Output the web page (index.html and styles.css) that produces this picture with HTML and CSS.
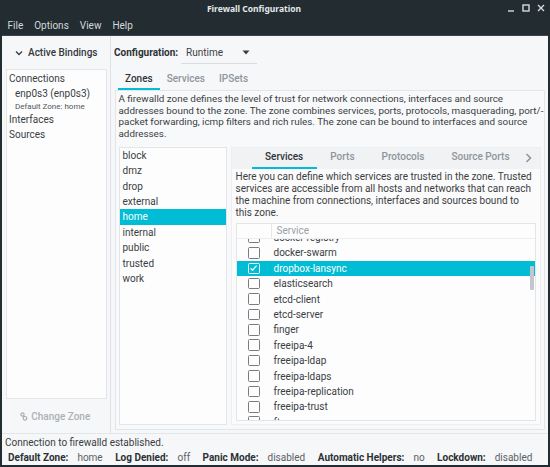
FILE: index.html
```html
<!DOCTYPE html>
<html>
<head>
<meta charset="utf-8">
<title>Firewall Configuration</title>
<link rel="stylesheet" href="styles.css">
</head>
<body>
<div class="window">
  <div class="titlebar">
    <span class="title">Firewall Configuration</span>
    <div class="wbtns">
      <svg width="8" height="8" viewBox="0 0 8 8"><path d="M1 7H7" stroke="#d5dadd" stroke-width="1.4"/></svg>
      <svg width="8" height="8" viewBox="0 0 8 8"><rect x="1" y="1" width="6" height="6" fill="none" stroke="#d5dadd" stroke-width="1.4"/></svg>
      <svg width="8" height="8" viewBox="0 0 8 8"><path d="M1 1L7 7M7 1L1 7" stroke="#d5dadd" stroke-width="1.4"/></svg>
    </div>
  </div>
  <div class="menubar">
    <span>File</span><span>Options</span><span>View</span><span>Help</span>
  </div>
  <div class="body">
    <div class="main">
      <div class="sidebar">
        <div class="bind-head">
          <svg width="8" height="6" viewBox="0 0 8 6"><path d="M1 1.5L4 4.5L7 1.5" fill="none" stroke="#3a3e42" stroke-width="1.3"/></svg>
          <span>Active Bindings</span>
        </div>
        <div class="bind-list">
          <div class="bl-item">Connections</div>
          <div class="bl-conn">enp0s3 (enp0s3)</div>
          <div class="bl-sub">Default Zone: home</div>
          <div class="bl-item">Interfaces</div>
          <div class="bl-item">Sources</div>
        </div>
        <div class="change-zone">
          <svg width="8" height="9" viewBox="0 0 8 9"><circle cx="2.5" cy="2.5" r="1.6" fill="none" stroke="#a8aeb3" stroke-width="1.2"/><circle cx="5" cy="6.3" r="1.8" fill="none" stroke="#a8aeb3" stroke-width="1.2"/><path d="M3.4 3.8L4.2 4.8" stroke="#a8aeb3" stroke-width="1.2"/></svg>
          <span>Change Zone</span>
        </div>
      </div>
      <div class="content">
        <div class="config-row">
          <span class="cfg-label">Configuration:</span>
          <div class="combo">
            <span>Runtime</span>
            <svg width="8" height="5" viewBox="0 0 8 5"><path d="M0.5 0.5H7.5L4 4.5Z" fill="#3a3e42"/></svg>
          </div>
        </div>
        <div class="tabs">
          <span class="tab active">Zones</span><span class="tab">Services</span><span class="tab">IPSets</span>
        </div>
        <div class="tabpanel">
          <p class="desc">A firewalld zone defines the level of trust for network connections, interfaces and source addresses bound to the zone. The zone combines services, ports, protocols, masquerading, port/-packet forwarding, icmp filters and rich rules. The zone can be bound to interfaces and source addresses.</p>
          <div class="zone-area">
            <div class="zone-list">
              <div class="zrow">block</div>
              <div class="zrow">dmz</div>
              <div class="zrow">drop</div>
              <div class="zrow">external</div>
              <div class="zrow sel">home</div>
              <div class="zrow">internal</div>
              <div class="zrow">public</div>
              <div class="zrow">trusted</div>
              <div class="zrow">work</div>
            </div>
            <div class="notebook">
              <div class="nb-tabs">
                <span class="nbtab active">Services</span><span class="nbtab">Ports</span><span class="nbtab">Protocols</span><span class="nbtab">Source Ports</span>
                <svg class="nb-arrow" width="7" height="10" viewBox="0 0 7 10"><path d="M1.5 1L5.5 5L1.5 9" fill="none" stroke="#8d9398" stroke-width="1.5"/></svg>
              </div>
              <div class="nb-body">
                <p class="nb-desc">Here you can define which services are trusted in the zone. Trusted services are accessible from all hosts and networks that can reach the machine from connections, interfaces and sources bound to this zone.</p>
                <div class="tree">
                  <div class="tree-head"><span class="th-c1"></span><span class="th-c2">Service</span></div>
                  <div class="tree-body">
                    <div class="rows">
                      <div class="trow"><span class="cb"></span><span>docker-registry</span></div>
                      <div class="trow"><span class="cb"></span><span>docker-swarm</span></div>
                      <div class="trow sel"><span class="cb on"><svg width="9" height="8" viewBox="0 0 9 8"><path d="M1.5 4.2L3.6 6.2L7.6 1.6" fill="none" stroke="#e6fafd" stroke-width="1.3"/></svg></span><span>dropbox-lansync</span></div>
                      <div class="trow"><span class="cb"></span><span>elasticsearch</span></div>
                      <div class="trow"><span class="cb"></span><span>etcd-client</span></div>
                      <div class="trow"><span class="cb"></span><span>etcd-server</span></div>
                      <div class="trow"><span class="cb"></span><span>finger</span></div>
                      <div class="trow"><span class="cb"></span><span>freeipa-4</span></div>
                      <div class="trow"><span class="cb"></span><span>freeipa-ldap</span></div>
                      <div class="trow"><span class="cb"></span><span>freeipa-ldaps</span></div>
                      <div class="trow"><span class="cb"></span><span>freeipa-replication</span></div>
                      <div class="trow"><span class="cb"></span><span>freeipa-trust</span></div>
                      <div class="trow"><span class="cb"></span><span>ftp</span></div>
                    </div>
                    <div class="scrollbar"></div>
                  </div>
                </div>
              </div>
            </div>
          </div>
        </div>
      </div>
    </div>
    <div class="status">
      <div class="st-line">Connection to firewalld established.</div>
      <div class="st-line st-fields">
        <b>Default Zone:</b><span class="val">home</span>
        <b>Log Denied:</b><span class="val">off</span>
        <b>Panic Mode:</b><span class="val">disabled</span>
        <b>Automatic Helpers:</b><span class="val">no</span>
        <b>Lockdown:</b><span class="val">disabled</span>
      </div>
    </div>
  </div>
</div>
</body>
</html>
```

FILE: styles.css
```css
* { box-sizing: border-box; }
html, body { margin: 0; padding: 0; }
body {
  width: 550px;
  height: 467px;
  overflow: hidden;
  font-family: Roboto, "Liberation Sans", sans-serif;
  font-size: 10px;
  color: #3a3e42;
}
.window {
  width: 550px;
  height: 467px;
  background: #232c31;
  padding: 0 2px 2px;
  display: flex;
  flex-direction: column;
}
.titlebar {
  height: 17px;
  flex-shrink: 0;
  position: relative;
  display: flex;
  align-items: center;
  justify-content: center;
  padding-right: 42px;
}
.title {
  font-family: "Noto Sans", sans-serif;
  font-weight: bold;
  font-size: 8.5px;
  color: #e4e8ea;
}
.wbtns {
  position: absolute;
  right: 3px;
  top: 4px;
  display: flex;
  gap: 7px;
}
.wbtns svg { display: block; }
.menubar {
  height: 18px;
  flex-shrink: 0;
  display: flex;
  align-items: center;
  padding-left: 0;
  color: #d3d8db;
  padding-bottom: 1px;
}
.menubar span { padding: 0 5.5px; }
.body {
  flex: 1;
  min-height: 0;
  background: #f6f7f9;
  display: flex;
  flex-direction: column;
  border-top: 1px solid #3b464c;
}
.main {
  height: 397px;
  flex-shrink: 0;
  display: flex;
}
.sidebar {
  width: 109px;
  flex-shrink: 0;
  border-right: 1px solid #e0e3e6;
  display: flex;
  flex-direction: column;
  padding: 0 3px 0 3.5px;
}
.bind-head {
  height: 33px;
  flex-shrink: 0;
  display: flex;
  align-items: center;
  justify-content: center;
  gap: 5px;
  font-weight: 500;
  color: #34383c;
}
.bind-head svg { display: block; }
.bind-list {
  height: 330px;
  flex-shrink: 0;
  background: #fdfdfe;
  border: 1px solid #e3e6e9;
  padding: 1px 0 0 2.5px;
}
.bl-item { height: 15px; line-height: 15px; }
.bl-conn { height: 15.5px; line-height: 16px; padding-left: 6px; }
.bl-sub { font-size: 8px; height: 10.5px; line-height: 9px; padding-left: 6px; color: #50565b; }
.change-zone {
  flex: 1;
  display: flex;
  align-items: center;
  justify-content: center;
  gap: 3px;
  color: #abb1b6;
  font-weight: 500;
  padding-right: 2px;
}
.change-zone svg { display: block; }
.content {
  flex: 1;
  min-width: 0;
  display: flex;
  flex-direction: column;
  padding: 0 3px 3px 0;
}
.config-row {
  height: 33px;
  flex-shrink: 0;
  display: flex;
  align-items: center;
  padding-left: 3px;
}
.cfg-label { font-weight: bold; color: #2d3135; width: 67px; }
.combo {
  width: 75.5px;
  height: 22px;
  margin-top: 1px;
  border-bottom: 1px solid #d9dde0;
  display: flex;
  align-items: center;
  justify-content: space-between;
  padding: 0 7px 0 5px;
}
.combo svg { display: block; }
.tabs {
  display: flex;
  flex-shrink: 0;
  padding-left: 7px;
}
.tab {
  padding: 3.5px 7px 3.5px;
  line-height: 12px;
  border-bottom: 2px solid transparent;
  color: #8f959a;
  font-weight: 500;
}
.tab.active { color: #2f3337; border-bottom-color: #00bcd4; }
.tabpanel {
  flex: 1;
  min-height: 0;
  margin-left: 4px;
  border: 1px solid #e3e6e9;
  background: #f8f9fa;
  display: flex;
  flex-direction: column;
  padding: 2px 3px 4px 2.5px;
}
.desc {
  margin: 0 -8px 7px 0;
  font-size: 9.86px;
  line-height: 11.7px;
  flex-shrink: 0;
}
.zone-area {
  flex: 1;
  min-height: 0;
  display: flex;
  gap: 4px;
}
.zone-list {
  width: 108px;
  flex-shrink: 0;
  background: #fdfdfe;
  border: 1px solid #e3e6e9;
}
.zrow {
  height: 15.4px;
  line-height: 15.4px;
  padding-left: 3px;
}
.zrow.sel { background: #00bcd4; color: #fff; }
.notebook {
  flex: 1;
  min-width: 0;
  display: flex;
  flex-direction: column;
  background: #fbfbfc;
  border: 1px solid #eceef0;
}
.nb-tabs {
  height: 21px;
  flex-shrink: 0;
  background: #f0f2f4;
  display: flex;
  padding-left: 20px;
  position: relative;
  white-space: nowrap;
}
.nbtab {
  padding: 3px 13.5px 4px;
  line-height: 12px;
  border-bottom: 2px solid transparent;
  color: #8f959a;
  font-weight: 500;
}
.nbtab.active { color: #2f3337; border-bottom-color: #00bcd4; }
.nb-arrow { position: absolute; right: 8px; top: 5px; }
.nb-body {
  flex: 1;
  min-height: 0;
  display: flex;
  flex-direction: column;
  padding: 2.5px 4px 3px 4px;
}
.nb-desc {
  margin: 0 0 4px;
  line-height: 12px;
  flex-shrink: 0;
}
.tree {
  flex: 1;
  border: 1px solid #e3e6e9;
  background: #fdfdfe;
  display: flex;
  flex-direction: column;
  min-height: 0;
}
.tree-head {
  height: 14.5px;
  flex-shrink: 0;
  display: flex;
  border-bottom: 1px solid #eceef0;
  color: #9aa0a5;
  line-height: 13.5px;
}
.th-c1 { width: 35px; border-right: 1px solid #e6e8eb; }
.th-c2 { padding-left: 5px; }
.tree-body {
  flex: 1;
  min-height: 0;
  overflow: hidden;
  position: relative;
}
.rows { margin-top: -9px; }
.trow {
  height: 15.4px;
  display: flex;
  align-items: center;
}
.trow.sel { background: #00bcd4; color: #fff; }
.cb {
  width: 11.5px;
  height: 11.5px;
  border: 1.3px solid #767c81;
  border-radius: 1.5px;
  margin: 0 14px 0 11.5px;
  display: flex;
  align-items: center;
  justify-content: center;
  background: #fdfdfe;
}
.cb.on { border-color: #f2fcfd; background: transparent; }
.cb svg { display: block; }
.scrollbar {
  position: absolute;
  right: 1px;
  top: 27px;
  width: 4.5px;
  height: 24px;
  background: #c3c7cb;
  border-radius: 1px;
}
.status {
  flex: 1;
  border-top: 1px solid #e3e6e9;
  padding: 2px 0 0 3px;
  white-space: nowrap;
}
.st-line { height: 14.5px; line-height: 14.5px; }
.st-fields { padding-left: 3px; display: flex; }
.st-fields b { font-weight: bold; color: #2d3135; }
.st-fields .val { margin: 0 12.5px 0 9px; color: #5a6065; }
```
